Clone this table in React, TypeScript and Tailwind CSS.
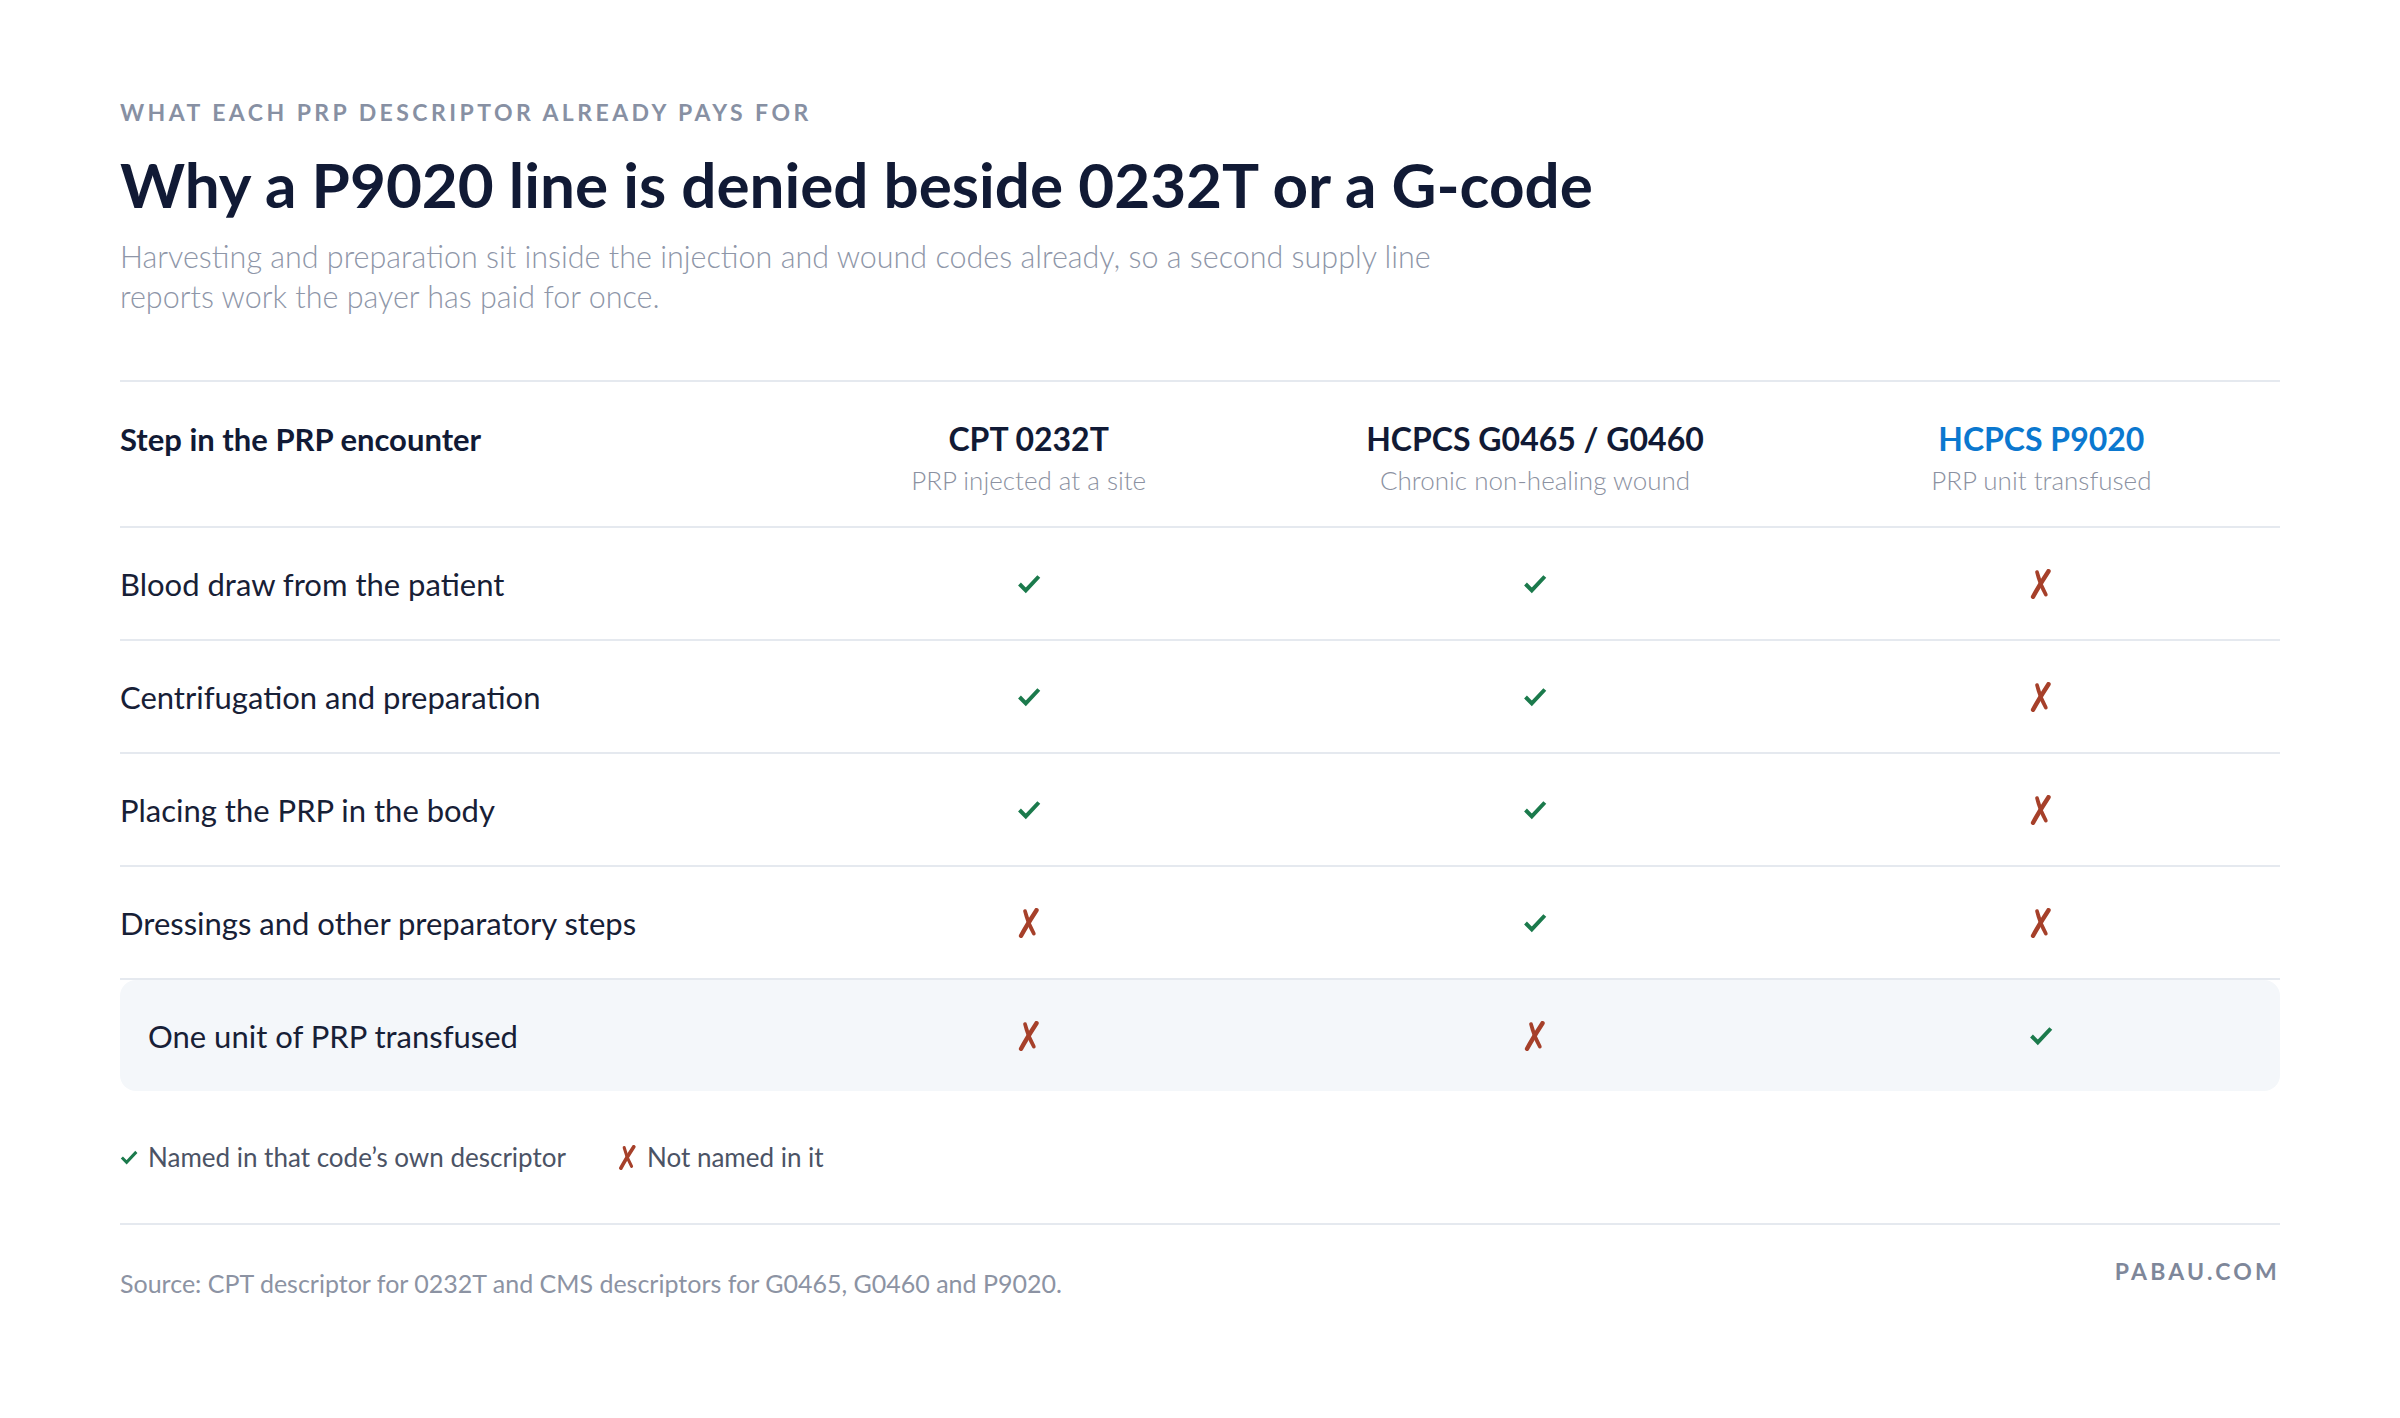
const font = { fontFamily: 'Lato, "Noto Sans", sans-serif' };

type Mark = 'yes' | 'no';

const columns = [
  { code: 'CPT 0232T', note: 'PRP injected at a site', accent: false },
  { code: 'HCPCS G0465 / G0460', note: 'Chronic non-healing wound', accent: false },
  { code: 'HCPCS P9020', note: 'PRP unit transfused', accent: true },
];

const rows: { step: string; marks: Mark[]; highlight?: boolean }[] = [
  { step: 'Blood draw from the patient', marks: ['yes', 'yes', 'no'] },
  { step: 'Centrifugation and preparation', marks: ['yes', 'yes', 'no'] },
  { step: 'Placing the PRP in the body', marks: ['yes', 'yes', 'no'] },
  { step: 'Dressings and other preparatory steps', marks: ['no', 'yes', 'no'] },
  { step: 'One unit of PRP transfused', marks: ['no', 'no', 'yes'], highlight: true },
];

function Check({ className }: { className: string }) {
  return (
    <svg viewBox="0 0 24 20" className={className} fill="none">
      <path d="M2.5 10 L8.8 16.3 L21.8 2.5" stroke="#1b7a4c" strokeWidth="4" strokeLinejoin="miter" />
    </svg>
  );
}

function Cross({ className }: { className: string }) {
  return (
    <svg viewBox="0 0 24 34" className={className} fill="none">
      <path d="M20.5 2.5 C15 11 8.5 21 3 31.5" stroke="#a6402a" strokeWidth="5" strokeLinecap="round" />
      <path d="M7.5 3.5 C9.5 12 13 21 17.5 29" stroke="#a6402a" strokeWidth="4.2" strokeLinecap="round" />
    </svg>
  );
}

function Tick({ mark }: { mark: Mark }) {
  return mark === 'yes' ? <Check className="h-[20px] w-[24px]" /> : <Cross className="h-[30px] w-[22px]" />;
}

export default function App() {
  return (
    <main className="min-h-[1418px] bg-white" style={font}>
      <div className="px-[120px] pt-[96px]">
        <p className="text-[23px] font-bold uppercase leading-[32px] tracking-[0.15em] text-[#8790a3]">
          What each PRP descriptor already pays for
        </p>
        <h1 className="mt-[18px] text-[62px] font-bold leading-[76px] text-[#111a35]">
          Why a P9020 line is denied beside 0232T or a G-code
        </h1>
        <p className="mt-[14px] max-w-[1380px] text-[30.5px] font-light leading-[40px] text-[#8e96a8]">
          Harvesting and preparation sit inside the injection and wound codes already, so a second supply line
          reports work the payer has paid for once.
        </p>

        <section className="mt-[64px] border-t-2 border-[#e5e9ef]">
          <div className="grid grid-cols-[641px_1fr_1fr_1fr] gap-x-[29px] border-b-2 border-[#e5e9ef] pt-[37px] pb-[30px]">
            <div className="text-[31px] font-bold leading-[40px] text-[#111a35]">Step in the PRP encounter</div>
            {columns.map((c) => (
              <div key={c.code} className="text-center">
                <div
                  className={`text-[32px] font-bold leading-[40px] ${c.accent ? 'text-[#0b78cf]' : 'text-[#111a35]'}`}
                >
                  {c.code}
                </div>
                <div className="mt-[5px] text-[26px] font-light leading-[32px] text-[#8b91a1]">{c.note}</div>
              </div>
            ))}
          </div>

          {rows.map((r) => (
            <div
              key={r.step}
              className={`grid grid-cols-[641px_1fr_1fr_1fr] items-center gap-x-[29px] ${
                r.highlight ? 'h-[111px] rounded-2xl bg-[#f4f7fa]' : 'h-[113px] border-b-2 border-[#e5e9ef]'
              }`}
            >
              <div className={`text-[31px] leading-[40px] text-[#172036] ${r.highlight ? 'pl-[28px]' : ''}`}>
                {r.step}
              </div>
              {r.marks.map((m, i) => (
                <div key={i} className="flex justify-center">
                  <Tick mark={m} />
                </div>
              ))}
            </div>
          ))}
        </section>

        <div className="mt-[48px] flex items-center gap-[52px] text-[26px] leading-[36px] text-[#4b5365]">
          <div className="flex items-center gap-[10px]">
            <Check className="h-[15px] w-[18px]" />
            <span>Named in that code’s own descriptor</span>
          </div>
          <div className="flex items-center gap-[10px]">
            <Cross className="h-[25px] w-[19px]" />
            <span>Not named in it</span>
          </div>
        </div>

        <footer className="mt-[48px] flex items-start justify-between border-t-2 border-[#e5e9ef] pt-[30px]">
          <p className="mt-[12px] text-[25px] leading-[32px] text-[#8c93a3]">
            Source: CPT descriptor for 0232T and CMS descriptors for G0465, G0460 and P9020.
          </p>
          <p className="text-[23px] font-bold uppercase leading-[32px] tracking-[0.14em] text-[#7e879a]">
            pabau.com
          </p>
        </footer>
      </div>
    </main>
  );
}
